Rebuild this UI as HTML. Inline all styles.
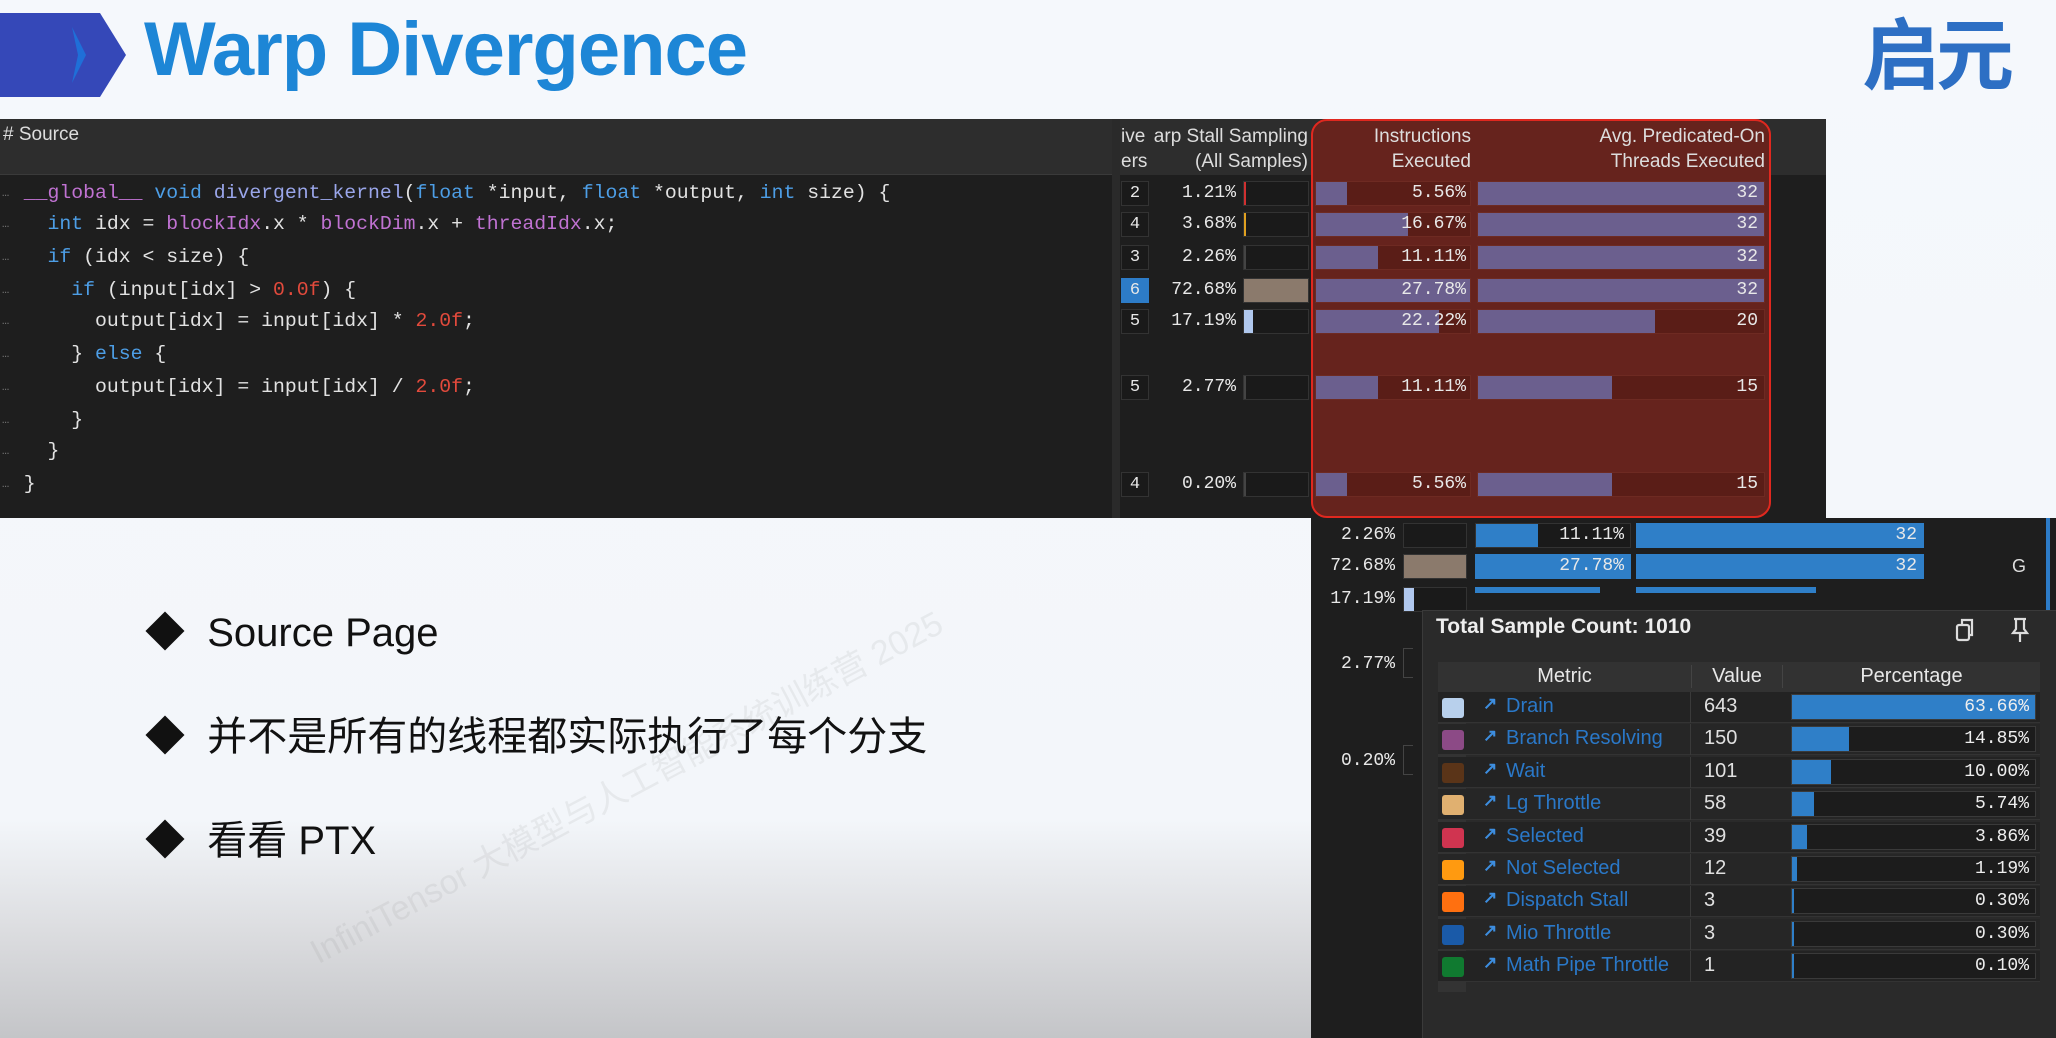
<!DOCTYPE html>
<html><head><meta charset="utf-8">
<style>
*{margin:0;padding:0;box-sizing:border-box}
body{width:2056px;height:1038px;overflow:hidden;position:relative;font-family:"Liberation Sans","Noto Sans CJK SC",sans-serif;background:linear-gradient(180deg,#f5f8fc 0px,#f3f6fa 820px,#dcdde0 930px,#c4c5c8 1038px)}
.a{position:absolute}
.mono{font-family:"Liberation Mono","DejaVu Sans Mono",monospace}
.nar{font-family:"Liberation Sans Narrow","Liberation Sans",sans-serif}
.code div{position:absolute;left:0;height:30px;line-height:30px;white-space:pre;font-size:19.8px;color:#e2e2e2}
.code .g{color:#777;font-size:12px;position:absolute;left:2px}
.k{color:#4d9ee6}.p{color:#c072d2}.n{color:#e24a3c}.f{color:#9aa6ea}
.cell{position:absolute;height:25px;background:#1a1a1a;border:1px solid #333}
.txt{position:absolute;color:#e8e8e8;font-size:18px;line-height:25px;text-align:right}
.bar{position:absolute;top:0;left:0;height:100%}
.prow{position:absolute;left:1438px;width:602px;height:31px}
.sw{position:absolute;left:4px;top:6px;width:22px;height:20px;border-radius:3px}
.mname{position:absolute;left:68px;top:3px;color:#2a78c8;font-size:20px}
.arr{position:absolute;left:45px;top:2px;color:#3d8ee0;font-size:17px;font-weight:bold}
.val{position:absolute;left:266px;top:3px;color:#e0e0e0;font-size:20px}
.pc{position:absolute;left:353px;top:2px;width:245px;height:26px;background:#1c1c1c;border:1px solid #3a3a3a}
.pct{position:absolute;right:6px;top:0;line-height:25px;color:#eee;font-size:18px}
.hd{color:#ddd;font-size:19px;line-height:25px}
</style></head><body>

<svg class="a" style="left:0;top:13px" width="130" height="84"><polygon points="0,0 100,0 126,42 100,84 0,84" fill="#3548b8"/><polygon points="72,14 86,42 72,70 78,42" fill="#1f6fd8"/></svg>
<div class="a" style="left:144px;top:6px;font-size:76px;font-weight:bold;color:#1d86d6;letter-spacing:-1px">Warp Divergence</div>
<div class="a" style="left:1862px;top:-6px;font-size:78px;font-weight:bold;color:#2d6fc4;font-family:'Noto Sans CJK SC',sans-serif;letter-spacing:-4px">启元</div>

<div class="a" style="left:0;top:119px;width:1112px;height:399px;background:#1e1e1e"></div>
<div class="a" style="left:0;top:119px;width:1112px;height:56px;background:#2d2d2d;border-bottom:1px solid #3a3a3a"></div>
<div class="a nar hd" style="left:3px;top:122px">#&nbsp;Source</div>
<div class="a code mono" style="left:0;top:0">
<div style="top:178px"><span class="g">…</span>  <span class="p">__global__</span> <span class="k">void</span> <span class="f">divergent_kernel</span>(<span class="k">float</span> *input, <span class="k">float</span> *output, <span class="k">int</span> size) {</div>
<div style="top:209px"><span class="g">…</span>    <span class="k">int</span> idx = <span class="p">blockIdx</span>.x * <span class="p">blockDim</span>.x + <span class="p">threadIdx</span>.x;</div>
<div style="top:242px"><span class="g">…</span>    <span class="k">if</span> (idx &lt; size) {</div>
<div style="top:275px"><span class="g">…</span>      <span class="k">if</span> (input[idx] &gt; <span class="n">0.0f</span>) {</div>
<div style="top:306px"><span class="g">…</span>        output[idx] = input[idx] * <span class="n">2.0f</span>;</div>
<div style="top:339px"><span class="g">…</span>      } <span class="k">else</span> {</div>
<div style="top:372px"><span class="g">…</span>        output[idx] = input[idx] / <span class="n">2.0f</span>;</div>
<div style="top:405px"><span class="g">…</span>      }</div>
<div style="top:436px"><span class="g">…</span>    }</div>
<div style="top:469px"><span class="g">…</span>  }</div>
</div>

<div class="a" style="left:1112px;top:119px;width:714px;height:399px;background:#1e1e1e"></div>
<div class="a" style="left:1112px;top:119px;width:8px;height:399px;background:#2a2a2a"></div>
<div class="a" style="left:1120px;top:119px;width:706px;height:56px;background:#2d2d2d"></div>
<div class="a nar hd" style="left:1121px;top:124px">ive<br>ers</div>
<div class="a nar hd" style="left:1150px;top:124px;width:158px;text-align:right;white-space:nowrap">arp Stall Sampling<br>(All Samples)</div>

<div class="a" style="left:1311px;top:119px;width:460px;height:399px;background:#66231d;border:2px solid #e0281f;border-radius:16px"></div>
<div class="a nar hd" style="left:1320px;top:124px;width:151px;text-align:right">Instructions<br>Executed</div>
<div class="a nar hd" style="left:1480px;top:124px;width:285px;text-align:right">Avg. Predicated-On<br>Threads Executed</div>

<div id="rows"></div>
<script>
var rows=[[181,"2","1.21%",0,"#d03030",2,20,"5.56%",100,"32"],[212,"4","3.68%",0,"#e0a020",2,60,"16.67%",100,"32"],[245,"3","2.26%",0,"#444",0,40,"11.11%",100,"32"],[278,"6","72.68%",1,"#8b7a6c",100,100,"27.78%",100,"32"],[309,"5","17.19%",0,"#b0c8ee",14,80,"22.22%",62,"20"],[375,"5","2.77%",0,"#444",0,40,"11.11%",47,"15"],[472,"4","0.20%",0,"#444",0,20,"5.56%",47,"15"]];
var h="";
rows.forEach(function(r){var y=r[0];
h+='<div class="cell mono" style="left:1121px;top:'+y+'px;width:28px;'+(r[3]?'background:#2d7cc8;border-color:#2d7cc8;':'')+'"><div class="txt" style="width:100%;text-align:center;top:-1px;font-size:17px">'+r[1]+'</div></div>';
h+='<div class="txt mono" style="left:1150px;top:'+y+'px;width:86px">'+r[2]+'</div>';
h+='<div class="cell" style="left:1243px;top:'+y+'px;width:66px"><div class="bar" style="width:'+r[5]+'%;min-width:2px;background:'+r[4]+'"></div></div>';
h+='<div class="cell" style="left:1315px;top:'+y+'px;width:156px;background:#5a1d17;border-color:#6e2a22"><div class="bar" style="width:'+r[6]+'%;background:#6b5f8e"></div><div class="txt mono" style="right:4px;top:-1px">'+r[7]+'</div></div>';
h+='<div class="cell" style="left:1477px;top:'+y+'px;width:288px;background:#5a1d17;border-color:#6e2a22"><div class="bar" style="width:'+r[8]+'%;background:#6b5f8e"></div><div class="txt mono" style="right:6px;top:-1px">'+r[9]+'</div></div>';
});
document.getElementById("rows").innerHTML=h;
</script>

<div class="a" style="left:1311px;top:518px;width:745px;height:520px;background:#1e1e1e"></div>
<div class="a" style="left:2046px;top:518px;width:4px;height:92px;background:#2d7cc8"></div>
<div class="txt a mono" style="left:1311px;top:523px;width:84px">2.26%</div>
<div class="cell" style="left:1403px;top:523px;width:64px"></div>
<div class="cell" style="left:1475px;top:523px;width:156px"><div class="bar" style="width:40%;background:#2f7fc8"></div><div class="txt mono" style="right:6px;top:-1px">11.11%</div></div>
<div class="cell" style="left:1636px;top:523px;width:288px;background:#2f7fc8;border-color:#2f7fc8"><div class="txt mono" style="right:6px;top:-1px">32</div></div>
<div class="txt a mono" style="left:1311px;top:554px;width:84px">72.68%</div>
<div class="cell" style="left:1403px;top:554px;width:64px;background:#8b7a6c"></div>
<div class="cell" style="left:1475px;top:554px;width:156px;background:#2f7fc8;border-color:#2f7fc8"><div class="txt mono" style="right:6px;top:-1px">27.78%</div></div>
<div class="cell" style="left:1636px;top:554px;width:288px;background:#2f7fc8;border-color:#2f7fc8"><div class="txt mono" style="right:6px;top:-1px">32</div></div>
<div class="a" style="left:2012px;top:556px;color:#ddd;font-size:18px">G</div>
<div class="txt a mono" style="left:1311px;top:587px;width:84px">17.19%</div>
<div class="cell" style="left:1403px;top:587px;width:64px"><div class="bar" style="width:10px;background:#b0c8ee"></div></div>
<div class="a" style="left:1475px;top:587px;width:125px;height:6px;background:#2f7fc8"></div>
<div class="a" style="left:1636px;top:587px;width:180px;height:6px;background:#2f7fc8"></div>
<div class="txt a mono" style="left:1311px;top:652px;width:84px">2.77%</div>
<div class="a" style="left:1403px;top:648px;width:10px;height:30px;border:1px solid #444;border-right:none"></div>
<div class="txt a mono" style="left:1311px;top:749px;width:84px">0.20%</div>
<div class="a" style="left:1403px;top:745px;width:10px;height:30px;border:1px solid #444;border-right:none"></div>

<div class="a" style="left:1422px;top:610px;width:634px;height:428px;background:#2a2a2a;border-top:1px solid #3a3a3a;border-left:1px solid #3a3a3a"></div>
<div class="a nar" style="left:1436px;top:615px;color:#eee;font-size:21px;font-weight:bold">Total Sample Count: 1010</div>
<svg class="a" style="left:1954px;top:616px" width="24" height="28" fill="none" stroke="#ddd" stroke-width="2.2"><rect x="3" y="9" width="12" height="15" rx="2"/><path d="M8 9V4h10v15h-3"/></svg>
<svg class="a" style="left:2008px;top:616px" width="24" height="28" fill="none" stroke="#ddd" stroke-width="2.2"><path d="M6 3h12M8 3v10l-3 4h14l-3-4V3M12 17v9"/></svg>
<div class="a" style="left:1438px;top:662px;width:602px;height:30px;background:#323232"></div>
<div class="a nar" style="left:1438px;top:665px;width:253px;text-align:center;color:#e8e8e8;font-size:20px">Metric</div>
<div class="a nar" style="left:1691px;top:665px;width:92px;text-align:center;color:#e8e8e8;font-size:20px;border-left:1px solid #444;border-right:1px solid #444">Value</div>
<div class="a nar" style="left:1783px;top:665px;width:257px;text-align:center;color:#e8e8e8;font-size:20px">Percentage</div>
<div class="a" style="left:1438px;top:692px;width:28px;height:300px;background:#333"></div>
<div id="prows" class="nar"></div>
<script>
var m=[["Drain","643","63.66%","#b8d0ec",100],["Branch Resolving","150","14.85%","#8c4a86",23.5],["Wait","101","10.00%","#5a3418",16],["Lg Throttle","58","5.74%","#e0b070",9],["Selected","39","3.86%","#d03450",6],["Not Selected","12","1.19%","#ff9a10",2],["Dispatch Stall","3","0.30%","#ff7010",0.5],["Mio Throttle","3","0.30%","#1a5aa8",0.5],["Math Pipe Throttle","1","0.10%","#107a30",0.3]];
var s="";
m.forEach(function(r,i){var y=692+i*32.4;
s+='<div class="prow" style="top:'+y+'px;background:'+(i%2?'#262626':'#232323')+';border-bottom:1px solid #333"><div class="sw" style="background:'+r[3]+'"></div><div class="arr">↗</div><div class="mname">'+r[0]+'</div><div class="a" style="left:252px;top:0;width:1px;height:31px;background:#3a3a3a"></div><div class="val">'+r[1]+'</div><div class="pc"><div class="bar" style="width:'+r[4]+'%;min-width:2px;background:#2f7fc8"></div><div class="pct mono">'+r[2]+'</div></div></div>';
});
document.getElementById("prows").innerHTML=s;
</script>

<div class="a" style="left:145px;top:608px;font-size:40px;color:#111;line-height:50px">◆&nbsp;&nbsp;Source Page</div>
<div class="a" style="left:145px;top:712px;font-size:40px;color:#111;line-height:50px">◆&nbsp;&nbsp;并不是所有的线程都实际执行了每个分支</div>
<div class="a" style="left:145px;top:816px;font-size:40px;color:#111;line-height:50px">◆&nbsp;&nbsp;看看 PTX</div>

<div class="a" style="left:300px;top:930px;font-size:34px;color:rgba(120,120,120,0.10);transform:rotate(-28deg);transform-origin:left top;white-space:nowrap">InfiniTensor 大模型与人工智能系统训练营 2025</div>
</body></html>
